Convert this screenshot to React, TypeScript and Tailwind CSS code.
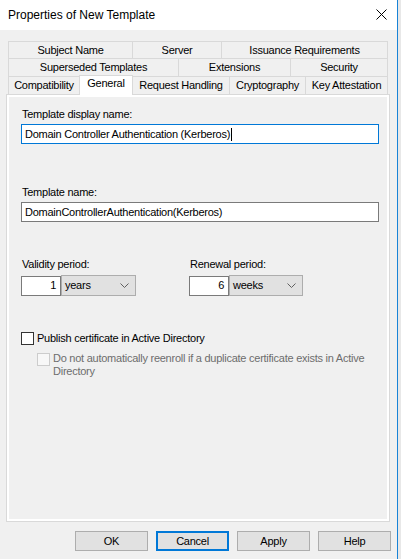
import React from "react";

function Tab({ label, w, cls = "" }: { label: string; w: string; cls?: string }) {
  return (
    <div className={`${w} ${cls} h-full flex items-center justify-center border-t border-[#d9d9d9] whitespace-nowrap`}>
      {label}
    </div>
  );
}

function Chevron() {
  return (
    <svg width="9" height="5" viewBox="0 0 9 5" className="block">
      <path d="M0.5 0.5 L4.5 4.5 L8.5 0.5" fill="none" stroke="#606060" strokeWidth="1" />
    </svg>
  );
}

function Period({ label, value, unit, selW }: { label: string; value: string; unit: string; selW: string }) {
  return (
    <div className="flex flex-col">
      <div className="ml-px leading-[15px]">{label}</div>
      <div className="mt-[3px] flex items-center">
        <div className="w-[40px] h-[20px] border border-[#7a7a7a] bg-white flex items-center justify-end pr-[4px]">
          {value}
        </div>
        <div className={`${selW} h-[21px] border border-[#adadad] bg-[#e1e1e1] flex items-center justify-between pl-[3px] pr-[6px]`}>
          <span>{unit}</span>
          <Chevron />
        </div>
      </div>
    </div>
  );
}

function Button({ label, primary = false }: { label: string; primary?: boolean }) {
  return (
    <div
      className={`w-[73px] h-[20px] flex items-center justify-center bg-[#e1e1e1] ${
        primary ? "border-2 border-[#0078d7]" : "border border-[#adadad]"
      }`}
    >
      {label}
    </div>
  );
}

export default function App() {
  return (
    <div className="w-[401px] h-[559px] flex font-['Liberation_Sans',Arial,sans-serif] text-[11px] tracking-[-0.25px] leading-[15px] text-black overflow-hidden">
      <div className="w-[398px] h-full flex flex-col border-r border-[#1883d7] bg-[#f0f0f0]">
        {/* Title bar */}
        <div className="h-[30px] bg-white flex items-center justify-between pl-[8px] pr-[10px] shrink-0">
          <span className="text-[12px] tracking-normal">Properties of New Template</span>
          <svg width="11" height="11" viewBox="0 0 11 11" className="block -mt-[1px]">
            <path d="M0.5 0.5 L10.5 10.5 M10.5 0.5 L0.5 10.5" stroke="#000" strokeWidth="1" fill="none" />
          </svg>
        </div>

        {/* Tab control */}
        <div className="mt-[11px] ml-[6px] w-[384px] flex flex-col">
          <div className="ml-[2px] w-[380px] flex flex-col">
            <div className="h-[17px] flex">
              <Tab label="Subject Name" w="w-[124px]" cls="border-l" />
              <Tab label="Server" w="w-[89px]" cls="border-l" />
              <Tab label="Issuance Requirements" w="w-[167px]" cls="border-l border-r" />
            </div>
            <div className="h-[18px] flex">
              <Tab label="Superseded Templates" w="w-[170px]" cls="border-l" />
              <Tab label="Extensions" w="w-[112px]" cls="border-l" />
              <Tab label="Security" w="w-[98px]" cls="border-l border-r" />
            </div>
            <div className="h-[18px] flex">
              <Tab label="Compatibility" w="w-[71px]" cls="border-l" />
              <div className="relative z-10 w-[54px] h-[20px] -mt-[1px] bg-white border-l border-r border-t border-[#d9d9d9] flex items-center justify-center pb-[4px]">
                General
              </div>
              <Tab label="Request Handling" w="w-[96px]" />
              <Tab label="Cryptography" w="w-[76px]" cls="border-l" />
              <Tab label="Key Attestation" w="w-[83px]" cls="border-l border-r" />
            </div>
          </div>

          {/* Panel */}
          <div className="h-[428px] border border-[#d9d9d9] bg-white p-[2px]">
            <div className="h-full bg-[#f0f0f0] pl-[12px] pt-[10px] flex flex-col">
              <div className="ml-px">Template display name:</div>
              <div className="mt-[2px] w-[358px] h-[20px] border border-[#0078d7] bg-white flex items-center pl-[3px]">
                <span>Domain Controller Authentication (Kerberos)</span>
                <span className="inline-block w-px h-[13px] bg-black ml-px" />
              </div>

              <div className="mt-[41px] ml-px">Template name:</div>
              <div className="mt-[2px] w-[358px] h-[20px] border border-[#7a7a7a] bg-white flex items-center pl-[3px]">
                DomainControllerAuthentication(Kerberos)
              </div>

              <div className="mt-[35px] flex">
                <Period label="Validity period:" value="1" unit="years" selW="w-[75px]" />
                <div className="ml-[53px]">
                  <Period label="Renewal period:" value="6" unit="weeks" selW="w-[74px]" />
                </div>
              </div>

              <div className="mt-[35px] flex items-center h-[15px]">
                <div className="shrink-0 w-[13px] h-[13px] border border-[#333333] bg-white" />
                <span className="ml-[3px]">Publish certificate in Active Directory</span>
              </div>
              <div className="mt-[6px] ml-[16px] flex items-start">
                <div className="shrink-0 mt-[1px] w-[13px] h-[13px] border border-[#cccccc] bg-[#f7f7f7]" />
                <div className="ml-[3px] leading-[13px] text-[#6d6d6d] whitespace-nowrap">
                  Do not automatically reenroll if a duplicate certificate exists in Active
                  <br />
                  Directory
                </div>
              </div>
            </div>
          </div>
        </div>

        {/* Buttons */}
        <div className="mt-[9px] flex justify-end gap-[8px] pr-[6px]">
          <Button label="OK" />
          <Button label="Cancel" primary />
          <Button label="Apply" />
          <Button label="Help" />
        </div>
      </div>
      <div className="flex-1 h-full bg-[#e8e8e8]" />
    </div>
  );
}
